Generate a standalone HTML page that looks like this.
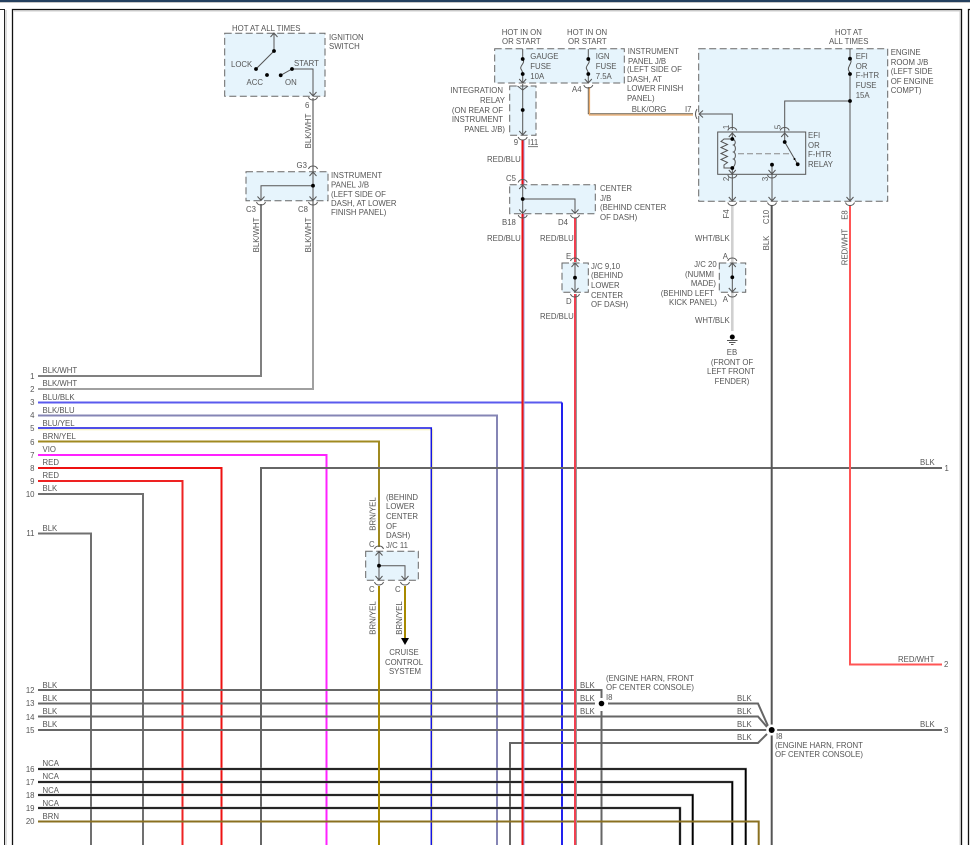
<!DOCTYPE html>
<html><head><meta charset="utf-8"><title>Wiring diagram</title>
<style>
html,body{margin:0;padding:0;background:#fff;width:970px;height:845px;overflow:hidden}
svg{display:block;filter:blur(.3px)}
text{font-family:"Liberation Sans",sans-serif;font-size:7.8px;fill:#555}
.e{text-anchor:end}.m{text-anchor:middle}
.w{fill:none;stroke-width:2}
.l{fill:none;stroke:#555;stroke-width:1}
.b{fill:#e6f4fc;stroke:#666;stroke-width:1;stroke-dasharray:7 3.5}
</style></head><body>
<svg width="970" height="845" viewBox="0 0 970 845" xmlns="http://www.w3.org/2000/svg">
<defs>
<g id="ad"><path d="M-3.5 -4L0 0L3.5 -4" fill="none" stroke="#555" stroke-width="1"/></g>
<g id="au"><path d="M-3.5 4L0 0L3.5 4" fill="none" stroke="#555" stroke-width="1"/></g>
<g id="cd"><path d="M-4.5 -1Q-3.5 2 0 2Q3.5 2 4.5 -1" fill="none" stroke="#555" stroke-width="1"/></g>
<g id="cu"><path d="M-4.5 1Q-3.5 -2 0 -2Q3.5 -2 4.5 1" fill="none" stroke="#555" stroke-width="1"/></g>
</defs>

<!-- page chrome -->
<rect x="0" y="0" width="970" height="2" fill="#24405f"/>
<rect x="0" y="2" width="970" height="1" fill="#c8c8c8"/>
<path d="M0 9.5H4.5V845" fill="none" stroke="#222" stroke-width="1"/>
<path d="M6 10V845" stroke="#bbb" stroke-width="1"/>
<path d="M12.5 845V9.5H961.5V845" fill="none" stroke="#111" stroke-width="1.3"/>
<path d="M14 11H960V845" fill="none" stroke="#ccc" stroke-width="1"/>
<path d="M970 9.5H968.5V845" fill="none" stroke="#111" stroke-width="1.3"/>

<!-- left harness wires -->
<path class="w" stroke="#808080" d="M38 376H261V204"/>
<path class="w" stroke="#a0a0a0" d="M38 389H313V98"/>
<path class="w" stroke="#5a5aee" d="M38 402.5H562"/>
<path class="w" stroke="#2222ee" d="M562 402.5V845"/>
<path class="w" stroke="#8585b5" d="M38 415.5H497V845"/>
<path fill="none" stroke="#f5efb0" stroke-width="1" d="M38 429.7H432.7V845"/>
<path fill="none" stroke="#1515e0" stroke-width="1.5" d="M38 428H431.3V845"/>
<path class="w" stroke="#a08a20" d="M38 441.5H379V547"/>
<path class="w" stroke="#ff22ff" d="M38 455H326.5V845"/>
<path class="w" stroke="#ee1111" d="M38 468H221.5V845"/>
<path class="w" stroke="#ee2222" d="M38 481H182.5V845"/>
<path class="w" stroke="#707070" d="M38 494H143V845"/>
<path class="w" stroke="#707070" d="M38 533.5H91V845"/>
<path class="w" stroke="#666" d="M942 468H261V845"/>

<path class="w" stroke="#666" d="M38 690H601.5V698"/>
<path class="w" stroke="#666" d="M38 703.5H595M608 703.5H758L768 726"/>
<path class="w" stroke="#666" d="M38 716.5H758L767 727"/>
<path class="w" stroke="#666" d="M38 730H767M777 730H942"/>
<path class="w" stroke="#666" d="M601.5 711V845"/>
<path class="w" stroke="#666" d="M510 845V743H758L767 734"/>

<path fill="none" stroke="#999" stroke-width="2.6" d="M38 769H745.7V845M38 782H732.3V845M38 795H692.7V845M38 808H680V845"/>
<path fill="none" stroke="#000" stroke-width="1.6" d="M38 769H745.7V845M38 782H732.3V845M38 795H692.7V845M38 808H680V845"/>
<path class="w" stroke="#8a7020" d="M38 821.5H758.7V845"/>

<!-- center and right verticals -->
<path fill="none" stroke="#9999dd" stroke-width="1" d="M524 140V845"/>
<path fill="none" stroke="#ee1111" stroke-width="2" d="M522.5 140V845"/>
<path fill="none" stroke="#999" stroke-width="1" d="M576.5 218V262M576.5 294V845"/>
<path fill="none" stroke="#f04050" stroke-width="2" d="M575 218V262M575 294V845"/>
<path class="w" stroke="#555" d="M771.7 205V845"/>
<path class="w" stroke="#ff5555" d="M850 205V664.5H942"/>
<path fill="none" stroke="#d0d0d0" stroke-width="2.6" d="M732.3 206V331"/>
<path fill="none" stroke="#6a6050" stroke-width="1" d="M588.3 87V113.8H693"/>
<path fill="none" stroke="#e8a868" stroke-width="1.2" d="M589.5 87V115H693"/>

<circle cx="601.5" cy="703.5" r="4.5" fill="#fff"/><circle cx="601.5" cy="703.5" r="2.8" fill="#000"/>
<circle cx="771.7" cy="730" r="5.5" fill="#fff"/><circle cx="771.7" cy="730" r="3" fill="#000"/>

<!-- Ignition switch -->
<rect class="b" x="224.7" y="33.3" width="100.3" height="63"/>
<path class="l" stroke-width="1.2" d="M274 34V51L256 69M280.7 75.3L292 69H313V96"/>
<use href="#au" x="274" y="33"/><use href="#ad" x="313" y="96"/><use href="#cd" x="313" y="98"/>
<g fill="#000"><circle cx="274" cy="51" r="1.9"/><circle cx="256" cy="69" r="1.9"/><circle cx="267" cy="75" r="1.9"/><circle cx="280.7" cy="75.3" r="1.9"/><circle cx="292" cy="69" r="1.9"/></g>

<!-- Instrument panel J/B (left) -->
<use href="#cu" x="313" y="168"/>
<rect class="b" x="246" y="171.7" width="82" height="29"/>
<path class="l" d="M313 172V200M313 185.7H261V200"/>
<use href="#au" x="313" y="172"/><use href="#ad" x="313" y="200.5"/><use href="#ad" x="261" y="200.5"/>
<use href="#cd" x="313" y="203"/><use href="#cd" x="261" y="203"/>
<circle cx="313" cy="185.7" r="1.9" fill="#000"/>

<!-- Gauge / IGN fuses -->
<rect class="b" x="494.7" y="48.7" width="129.6" height="34.3"/>
<path class="l" d="M522.7 49V59C526 63 519 66 521 69C522 71 523 72 522.7 74V83M588.3 49V59C591.6 63 584.6 66 586.6 69C587.6 71 588.6 72 588.3 74V83"/>
<g fill="#000"><circle cx="522.7" cy="59" r="1.9"/><circle cx="522.7" cy="74" r="1.9"/><circle cx="588.3" cy="59" r="1.9"/><circle cx="588.3" cy="74" r="1.9"/></g>
<use href="#ad" x="522.7" y="83"/><use href="#ad" x="588.3" y="83"/><use href="#cd" x="588.3" y="86"/>

<!-- Integration relay -->
<rect class="b" x="509.7" y="86" width="26.3" height="49.3"/>
<path class="l" d="M522.7 84V135"/>
<path class="l" d="M517.5 86L522.7 90L528 86"/>
<circle cx="522.7" cy="110" r="1.9" fill="#000"/>
<use href="#ad" x="522.7" y="135"/><use href="#cd" x="522.7" y="138"/>

<!-- Center J/B -->
<use href="#cu" x="522.7" y="181.5"/>
<rect class="b" x="509.7" y="184.7" width="85.6" height="29"/>
<path class="l" d="M522.7 185V213M522.7 199H575V213"/>
<circle cx="522.7" cy="199" r="1.9" fill="#000"/>
<use href="#au" x="522.7" y="185"/><use href="#ad" x="522.7" y="213.5"/><use href="#ad" x="575" y="213.5"/>
<use href="#cd" x="522.7" y="216"/><use href="#cd" x="575" y="216"/>

<!-- J/C 9,10 -->
<use href="#cu" x="575" y="260"/>
<rect class="b" x="562" y="263" width="26.3" height="29.3"/>
<path class="l" d="M575 263V292"/>
<circle cx="575" cy="277.7" r="1.9" fill="#000"/>
<use href="#au" x="575" y="263"/><use href="#ad" x="575" y="292"/><use href="#cd" x="575" y="295"/>

<!-- Engine room J/B -->
<rect class="b" x="698.7" y="48.7" width="189" height="152.6"/>
<path class="l" d="M850 49V58.7C853.5 62 847 67 848.5 70C849.5 72 850.3 73 850 74V201M850 101H784.7V133M699 114H732.3V130"/>
<g fill="#000"><circle cx="850" cy="58.7" r="1.9"/><circle cx="850" cy="74" r="1.9"/><circle cx="850" cy="101" r="1.9"/></g>
<use href="#au" x="699" y="114" transform="rotate(-90 699 114)"/>
<path class="l" d="M697 109Q694 114 697 119"/>
<use href="#cu" x="732.3" y="129.5"/><use href="#cu" x="784.7" y="129.5"/>
<rect x="717.7" y="132" width="88" height="42.3" fill="#e6f4fc" stroke="#555" stroke-width="1"/>
<path class="l" d="M732.3 133V139H724L721 141.5L727.5 144.5L721 147.5L727.5 150.5L721 153.5L727.5 156.5L721 159.5L727.5 162.5L724 165V168H732.3V174"/>
<path class="l" d="M732.3 139C736 140 736 144 733.5 145C736 146 736 151 733.5 152C736 153 736 158 733.5 159C736 160 736 165 732.3 168"/>
<path d="M738 153.7H790" stroke="#888" stroke-width="1" stroke-dasharray="6 3" fill="none"/>
<path class="l" d="M784.7 133V142L797.7 164.3"/>
<path class="l" d="M772 164.7V201M732.3 174V201"/>
<g fill="#000"><circle cx="732.3" cy="139" r="1.9"/><circle cx="732.3" cy="168" r="1.9"/><circle cx="784.7" cy="142" r="1.9"/><circle cx="797.7" cy="164.3" r="1.9"/><circle cx="772" cy="164.7" r="1.9"/><circle cx="794.5" cy="159" r="1"/></g>
<use href="#au" x="732.3" y="133"/><use href="#au" x="784.7" y="133"/><use href="#ad" x="732.3" y="174"/><use href="#ad" x="772" y="174"/>
<use href="#cd" x="732.3" y="176"/><use href="#cd" x="772" y="176"/>
<use href="#ad" x="732.3" y="201"/><use href="#ad" x="772" y="201"/><use href="#ad" x="850" y="201"/>
<use href="#cd" x="732.3" y="203.5"/><use href="#cd" x="772" y="203.5"/><use href="#cd" x="850" y="203.5"/>

<!-- J/C 20 -->
<use href="#cu" x="732.3" y="260"/>
<rect class="b" x="719.3" y="263" width="26.4" height="29.3"/>
<path class="l" d="M732.3 263V292"/>
<circle cx="732.3" cy="277.3" r="1.9" fill="#000"/>
<use href="#au" x="732.3" y="263"/><use href="#ad" x="732.3" y="292"/><use href="#cd" x="732.3" y="295"/>
<circle cx="732.3" cy="337" r="2.5" fill="#000"/>
<path class="l" d="M727 340.5H737.5M729 342.5H735.5M731 344.5H733.5"/>

<!-- J/C 11 -->
<use href="#cu" x="379" y="548"/>
<rect class="b" x="365.7" y="551.3" width="52.6" height="29"/>
<path class="l" d="M379 551V580M379 565.7H405V580"/>
<circle cx="379" cy="565.7" r="1.9" fill="#000"/>
<use href="#au" x="379" y="551.5"/><use href="#ad" x="379" y="580"/><use href="#ad" x="405" y="580"/>
<use href="#cd" x="379" y="583"/><use href="#cd" x="405" y="583"/>
<path class="w" stroke="#a88a00" d="M379 586V845M405 586V640"/>
<path d="M401 638H409L405 645Z" fill="#000"/>

<!-- labels: ignition -->
<text x="232" y="31">HOT AT ALL TIMES</text>
<text x="329" y="40">IGNITION</text><text x="329" y="49">SWITCH</text>
<text x="231" y="67">LOCK</text><text x="294" y="66">START</text><text x="246.5" y="85">ACC</text><text x="285" y="85">ON</text>
<text x="305" y="108">6</text>
<text class="m" transform="translate(311 131) rotate(-90)">BLK/WHT</text>
<text x="296.5" y="168">G3</text>
<text x="331" y="178">INSTRUMENT</text><text x="331" y="187.5">PANEL J/B</text><text x="331" y="197">(LEFT SIDE OF</text><text x="331" y="206">DASH, AT LOWER</text><text x="331" y="215">FINISH PANEL)</text>
<text x="246" y="212">C3</text><text x="298" y="212">C8</text>
<text class="m" transform="translate(259 235) rotate(-90)">BLK/WHT</text>
<text class="m" transform="translate(311 235) rotate(-90)">BLK/WHT</text>

<!-- labels: center -->
<text x="501.7" y="35">HOT IN ON</text><text x="502" y="44">OR START</text>
<text x="567" y="35">HOT IN ON</text><text x="568" y="44">OR START</text>
<text x="530.3" y="59">GAUGE</text><text x="530.3" y="69">FUSE</text><text x="530.3" y="79">10A</text>
<text x="595.7" y="59">IGN</text><text x="595.7" y="69">FUSE</text><text x="595.7" y="79">7.5A</text>
<text x="627.7" y="54">INSTRUMENT</text><text x="628" y="64">PANEL J/B</text><text x="627" y="72">(LEFT SIDE OF</text><text x="627" y="82">DASH, AT</text><text x="627" y="91">LOWER FINISH</text><text x="627" y="101">PANEL)</text>
<text x="572" y="92">A4</text><text x="631.7" y="112">BLK/ORG</text><text x="685" y="112">I7</text>
<text class="e" x="503" y="93">INTEGRATION</text><text class="e" x="505" y="103">RELAY</text><text class="e" x="503" y="113">(ON REAR OF</text><text class="e" x="503" y="122">INSTRUMENT</text><text class="e" x="505" y="132">PANEL J/B)</text>
<text x="513.7" y="145">9</text><text x="528" y="145">I11</text><path d="M528 146.7H538" stroke="#555" stroke-width=".8"/>
<text x="487" y="162">RED/BLU</text><text x="506" y="181">C5</text>
<text x="600" y="191">CENTER</text><text x="600" y="201">J/B</text><text x="600" y="210">(BEHIND CENTER</text><text x="600" y="220">OF DASH)</text>
<text x="502" y="225">B18</text><text x="558" y="225">D4</text>
<text x="487" y="241">RED/BLU</text><text x="540" y="241">RED/BLU</text>
<text x="566" y="259">E</text><text x="566" y="304">D</text>
<text x="591" y="269">J/C 9,10</text><text x="591" y="278">(BEHIND</text><text x="591" y="288">LOWER</text><text x="591" y="298">CENTER</text><text x="591" y="307">OF DASH)</text>
<text x="540" y="319">RED/BLU</text>

<!-- labels: engine room -->
<text class="m" x="848.7" y="35">HOT AT</text><text class="m" x="848.7" y="44">ALL TIMES</text>
<text x="855.7" y="59">EFI</text><text x="855.7" y="69">OR</text><text x="855.7" y="78">F-HTR</text><text x="855.7" y="88">FUSE</text><text x="855.7" y="98">15A</text>
<text x="890.7" y="55">ENGINE</text><text x="890.7" y="65">ROOM J/B</text><text x="890.7" y="74">(LEFT SIDE</text><text x="890.7" y="84">OF ENGINE</text><text x="890.7" y="93">COMPT)</text>
<text x="808" y="138">EFI</text><text x="808" y="148">OR</text><text x="808" y="157">F-HTR</text><text x="808" y="167">RELAY</text>
<text class="m" transform="translate(729 127) rotate(-90)">1</text><text class="m" transform="translate(780.5 127) rotate(-90)">5</text>
<text class="m" transform="translate(729 179) rotate(-90)">2</text><text class="m" transform="translate(768 179) rotate(-90)">3</text>
<text class="m" transform="translate(729 214) rotate(-90)">F4</text>
<text class="m" transform="translate(769 217) rotate(-90)">C10</text>
<text class="m" transform="translate(847.6 215) rotate(-90)">E8</text>
<text class="m" transform="translate(769 243) rotate(-90)">BLK</text>
<text class="m" transform="translate(847.6 247) rotate(-90)">RED/WHT</text>
<text x="695" y="241">WHT/BLK</text><text x="695" y="323">WHT/BLK</text>
<text class="e" x="716.7" y="267">J/C 20</text><text class="e" x="714" y="277">(NUMMI</text><text class="e" x="716" y="286">MADE)</text><text class="e" x="714" y="296">(BEHIND LEFT</text><text class="e" x="717" y="305">KICK PANEL)</text>
<text x="722.7" y="259">A</text><text x="722.7" y="302">A</text>
<text class="m" x="732" y="355">EB</text><text class="m" x="732" y="365">(FRONT OF</text><text class="m" x="731" y="374">LEFT FRONT</text><text class="m" x="732" y="384">FENDER)</text>

<!-- labels: left numbers -->
<g>
<text class="e" x="34.5" y="379">1</text><text class="e" x="34.5" y="392">2</text><text class="e" x="34.5" y="405">3</text><text class="e" x="34.5" y="418">4</text><text class="e" x="34.5" y="431">5</text><text class="e" x="34.5" y="445">6</text><text class="e" x="34.5" y="458">7</text><text class="e" x="34.5" y="471">8</text><text class="e" x="34.5" y="484">9</text><text class="e" x="34.5" y="497">10</text><text class="e" x="34.5" y="536">11</text>
<text class="e" x="34.5" y="693">12</text><text class="e" x="34.5" y="706">13</text><text class="e" x="34.5" y="720">14</text><text class="e" x="34.5" y="733">15</text><text class="e" x="34.5" y="772">16</text><text class="e" x="34.5" y="785">17</text><text class="e" x="34.5" y="798">18</text><text class="e" x="34.5" y="811">19</text><text class="e" x="34.5" y="824">20</text>
</g>
<text x="42.5" y="373">BLK/WHT</text><text x="42.5" y="386">BLK/WHT</text><text x="42.5" y="400">BLU/BLK</text><text x="42.5" y="413">BLK/BLU</text><text x="42.5" y="426">BLU/YEL</text><text x="42.5" y="439">BRN/YEL</text><text x="42.5" y="452">VIO</text><text x="42.5" y="465">RED</text><text x="42.5" y="478">RED</text><text x="42.5" y="491">BLK</text><text x="42.5" y="531">BLK</text>
<text x="42.5" y="688">BLK</text><text x="42.5" y="701">BLK</text><text x="42.5" y="714">BLK</text><text x="42.5" y="727">BLK</text>
<text x="42.5" y="766">NCA</text><text x="42.5" y="779">NCA</text><text x="42.5" y="793">NCA</text><text x="42.5" y="806">NCA</text><text x="42.5" y="819">BRN</text>

<!-- labels: J/C 11 -->
<text class="m" transform="translate(375.7 514) rotate(-90)">BRN/YEL</text>
<text class="m" transform="translate(375.7 618) rotate(-90)">BRN/YEL</text>
<text class="m" transform="translate(402 618) rotate(-90)">BRN/YEL</text>
<text x="386" y="500">(BEHIND</text><text x="386" y="509">LOWER</text><text x="386" y="519">CENTER</text><text x="386" y="529">OF</text><text x="386" y="538">DASH)</text><text x="386" y="548">J/C 11</text>
<text x="369" y="547">C</text><text x="369" y="592">C</text><text x="395" y="592">C</text>
<text class="m" x="404" y="655">CRUISE</text><text class="m" x="404" y="665">CONTROL</text><text class="m" x="405" y="674">SYSTEM</text>

<!-- labels: lower right -->
<text x="606" y="681">(ENGINE HARN, FRONT</text><text x="606" y="690">OF CENTER CONSOLE)</text><text x="606" y="700">I8</text>
<text x="580" y="688">BLK</text><text x="580" y="701">BLK</text><text x="580" y="714">BLK</text>
<text x="737" y="701">BLK</text><text x="737" y="714">BLK</text><text x="737" y="727">BLK</text><text x="737" y="740">BLK</text>
<text x="776" y="739">I8</text><text x="775" y="748">(ENGINE HARN, FRONT</text><text x="775" y="757">OF CENTER CONSOLE)</text>
<text x="920" y="727">BLK</text><text x="944" y="733">3</text>
<text x="898" y="662">RED/WHT</text><text x="944" y="667">2</text>
<text x="920" y="465">BLK</text><text x="944.5" y="471">1</text>
</svg>
</body></html>
